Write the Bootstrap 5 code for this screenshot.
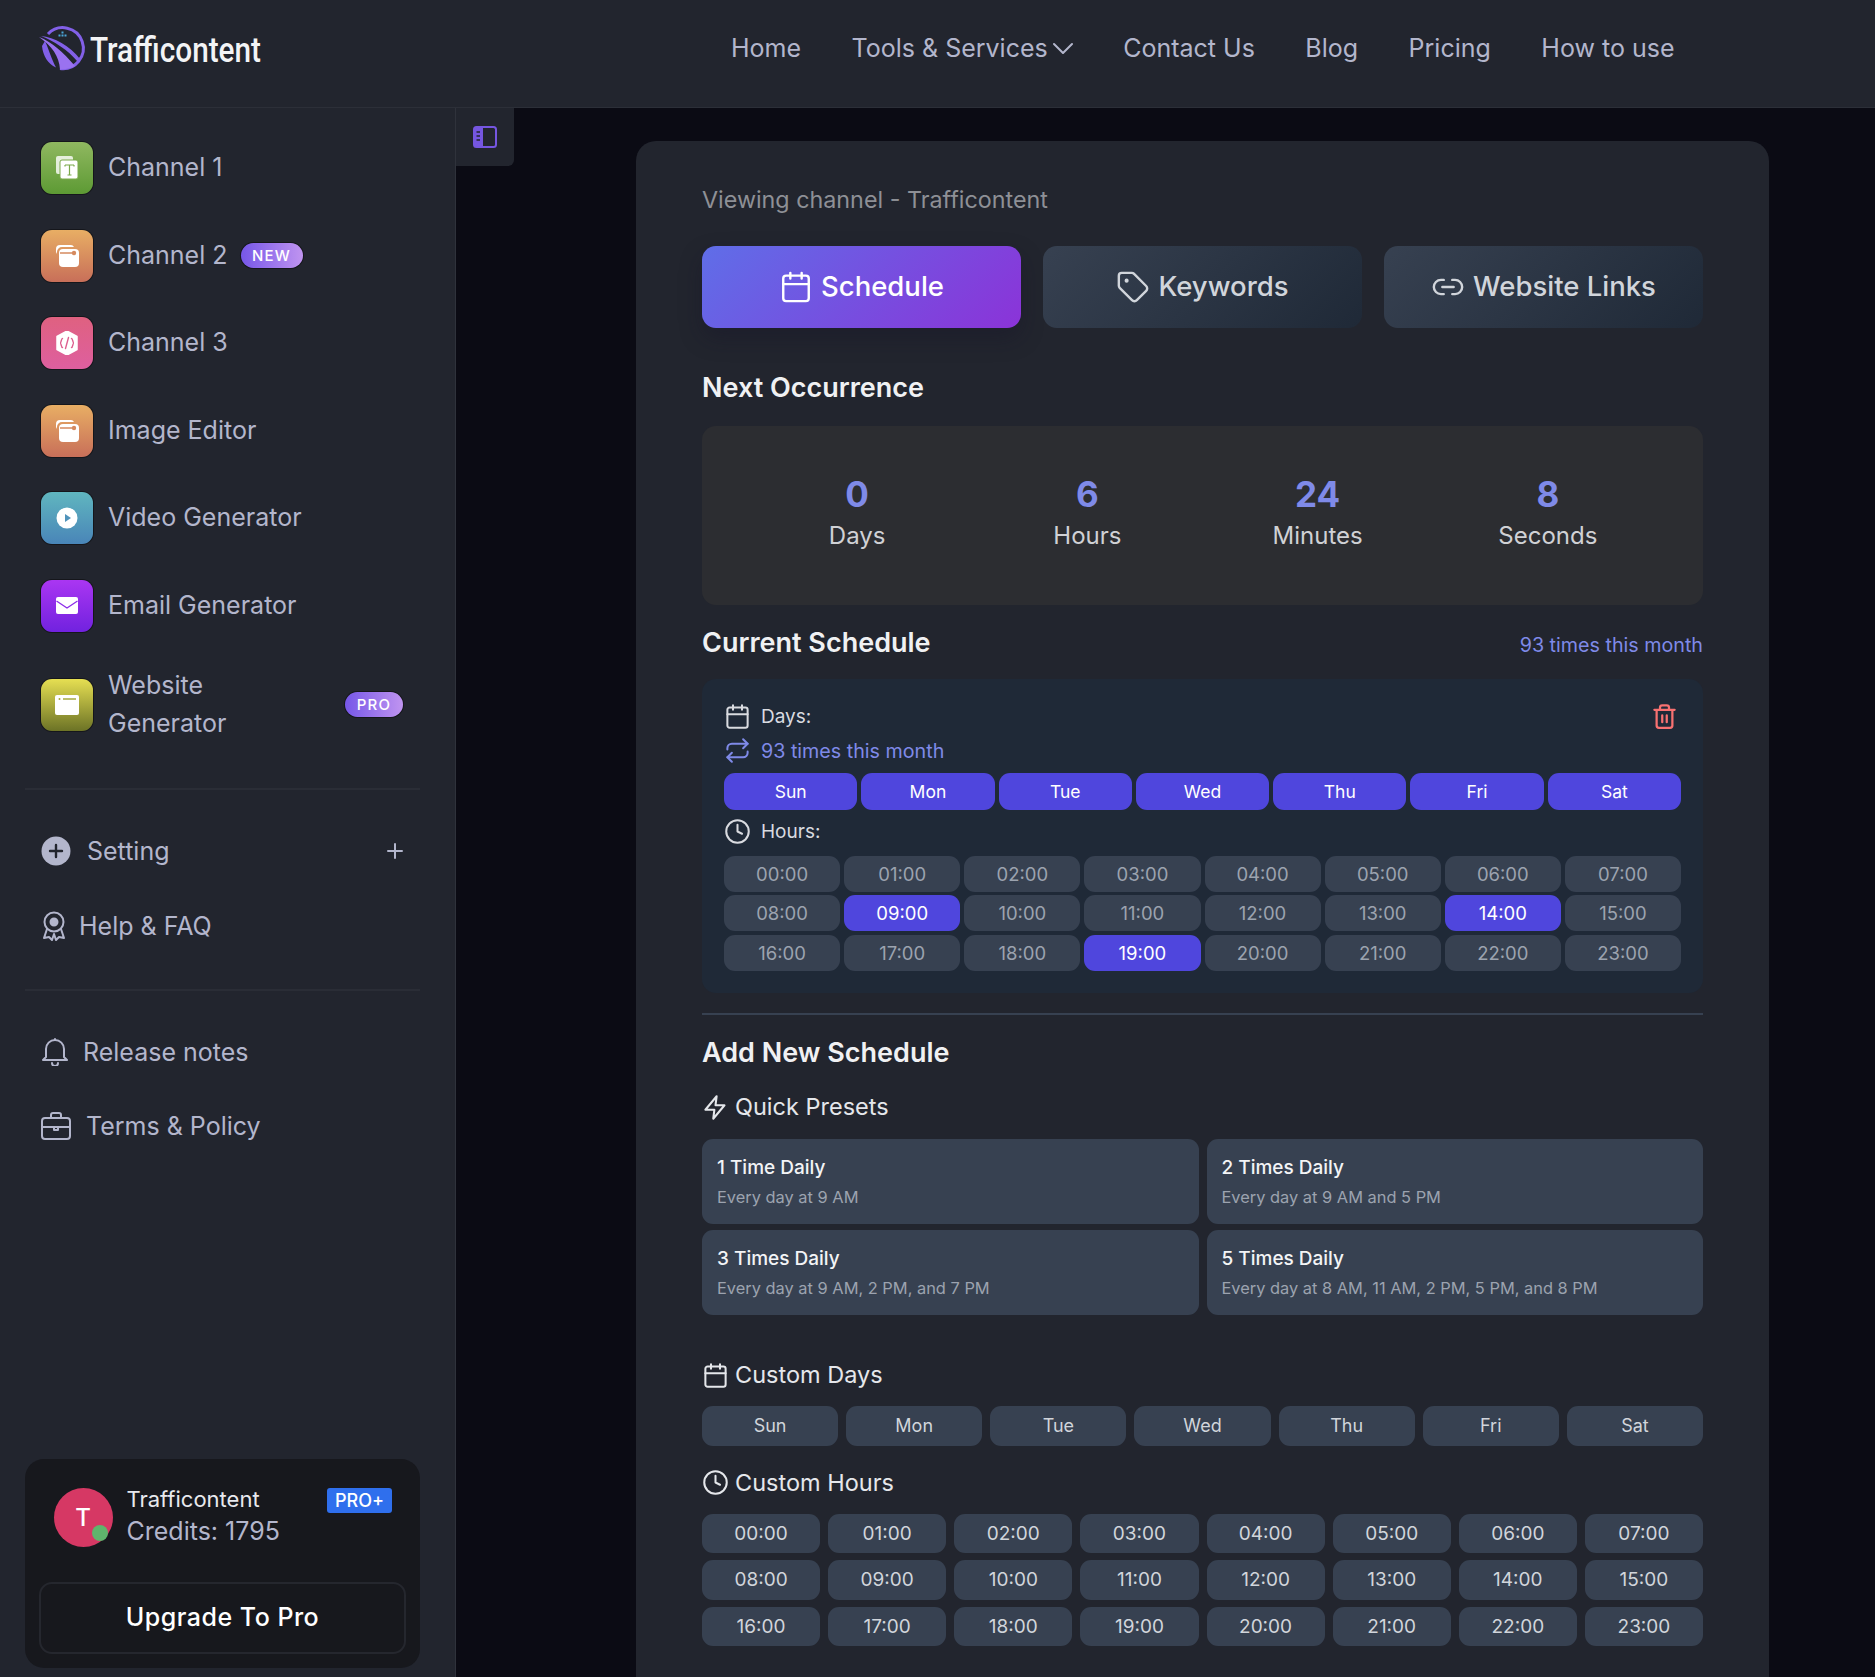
<!DOCTYPE html>
<html lang="en">
<head>
<meta charset="utf-8">
<title>Trafficontent</title>
<link href="https://cdn.jsdelivr.net/npm/bootstrap@5.3.0/dist/css/bootstrap.min.css" rel="stylesheet">
<style>
html,body{height:100%;overflow:hidden}
body{background:#0b0b14;font-family:Inter,"Noto Sans",sans-serif;color:#e5e7eb}
.ic{fill:none;stroke:currentColor;stroke-width:2;stroke-linecap:round;stroke-linejoin:round;flex:none}
.topbar{height:108px;background:#22252e;border-bottom:1px solid #2c2f38;padding:0 0 0 36px!important;flex-wrap:nowrap;justify-content:flex-start!important;align-items:flex-start}
.logo-link{display:flex;align-items:center;gap:2px;margin:22px 0 0;padding:0;width:226px;flex:none}
.logo-text{font-family:Roboto,sans-serif;font-weight:500;font-size:35px;line-height:42px;color:#f3f4f6;display:inline-block;transform:scaleX(.85);transform-origin:left center;padding-top:5px;white-space:nowrap}
.topnav{margin-left:469px;margin-top:30px;flex-direction:row;gap:50.5px}
.topnav .nav-link{padding:0;font-size:25px;line-height:36px;color:#b3b6cc;white-space:nowrap;display:flex;align-items:center;gap:5px}
.shell{height:1569px}
.side{width:456px;flex:none;background:#22252e;border-right:1px solid #2f323b;padding:34px 0 9px 0}
.chan{display:flex;align-items:center;padding:0 52px 0 41px;margin-bottom:35.5px;font-size:25px;line-height:37.5px;color:#b3b6cc}
.tile{width:52px;height:52px;border-radius:11px;flex:none;margin-right:15px;display:flex;align-items:center;justify-content:center;box-shadow:0 0 0 1px #15161b}
.t-green{background:linear-gradient(#90b860,#5d9a34)}
.t-orange{background:linear-gradient(#e8ae64,#c86f59)}
.t-pink{background:linear-gradient(#df6180,#de5f9f)}
.t-teal{background:linear-gradient(#60b6bf,#4985b8)}
.t-purple{background:linear-gradient(#aa36f2,#7122df)}
.t-yellow{background:linear-gradient(#e6df52,#6c7326)}
.pill{border-radius:20px;background:linear-gradient(90deg,#7657e8,#c094f0);color:#fff;font-size:15px;font-weight:500;letter-spacing:1.2px;height:25px;line-height:25px;padding:0;text-align:center;box-shadow:0 0 0 1px #15161b}
.pill-new{width:62px;margin-left:13px}
.pill-pro{width:58px;margin-left:auto}
.wrap-name{width:190px}
.sep{height:2px;background:#2a2d36;margin:0 35px 0 25px}
.sublink{display:flex;align-items:center;font-size:25px;line-height:36px;color:#b3b6cc;padding:0 52px 0 41px;text-decoration:none}
.ucard{margin:auto 35px 0 25px;height:209px;background:#17181d;border-radius:19px;padding:29px 14px 14px}
.avatar{width:59px;height:59px;border-radius:50%;background:#d63864;color:#fff;font-size:24px;font-weight:500;display:flex;align-items:center;justify-content:center;position:relative;flex:none;margin-left:14.5px}
.online{position:absolute;width:16px;height:16px;border-radius:50%;background:#5fb56c;right:5px;bottom:6px}
.uinfo{margin-left:14px}
.uname{font-size:22px;line-height:23px;color:#e8e9ee}
.ucredit{font-size:25px;line-height:41px;color:#b3b6cc}
.proplus{background:#2f6fed;color:#fff;font-size:18px;font-weight:500;border-radius:3px;height:25px;line-height:25px;width:65px;text-align:center;padding:0;margin-left:auto;margin-right:14px}
.upg{display:block;width:100%;height:72px;margin-top:30px;background:transparent;border:2px solid #25272e;border-radius:13px;color:#fff;font-size:25px;font-weight:500;letter-spacing:.5px}
.upg:hover{color:#fff}
.toggler{width:58px;height:58px;background:#22252e;border:0;border-radius:0 0 6px 0;flex:none;display:flex;align-items:center;justify-content:center;padding:0}
.panel{width:1133px;margin:33px 0 0 122px;background:#22252e;border-radius:20px 20px 0 0;padding:42px 66px 0;flex:none;height:1600px}
.viewing{font-size:23.3px;line-height:34px;color:#8e9096;margin:0 0 29px}
.tabs{display:grid;grid-template-columns:repeat(3,1fr);gap:22px;margin-bottom:42px}
.tabbtn{height:82px;border-radius:14px;border:0;font-size:27.5px;font-weight:500;color:#d1d5db;background:linear-gradient(135deg,#374151,#1f2937);display:flex;align-items:center;justify-content:center;gap:8px;padding:0}
.tabbtn .ic{stroke-width:1.7}
.tabbtn.on{background:linear-gradient(135deg,#5f6ee8,#8b33d8);color:#fff;box-shadow:0 10px 22px rgba(20,18,40,.35)}
.h3x{font-size:27px;font-weight:600;line-height:36px;color:#f0f1f3;margin:0}
.count{height:179px;border-radius:14px;background:#2c2d31;margin-top:20px;padding:0 40px;display:grid;grid-template-columns:repeat(4,1fr);align-items:start;text-align:center}
.num{font-size:35px;font-weight:700;color:#7f8ae8;line-height:44px;margin-top:46px}
.lab{font-size:24px;line-height:36px;color:#d0d1d5;margin-top:2px}
.sched-head{margin-top:20px;height:36px}
.times{font-size:19.7px;color:#7f8ae8}
.headtimes{padding-top:5px}
.curbox{height:314px;margin-top:18px;background:#1f2937;border-radius:14px;padding:24px 22px 0 22px;position:relative}
.rowline{display:flex;align-items:center;gap:10px;font-size:19px;line-height:26px;color:#d9dbe0}
.rowline .ic{stroke-width:1.8}
.rowline.times{font-size:19.7px;color:#7f8ae8;margin-top:7px}
.days7{display:grid;grid-template-columns:repeat(7,1fr);gap:4px}
.hours8{display:grid;grid-template-columns:repeat(8,1fr);gap:3.5px 4px}
.cell{border:0;padding:0;border-radius:11px;background:#374151;color:#9ca3af;font-size:18.5px;height:36px;line-height:36px;text-align:center}
.cell.sel{background:#4f46dd;color:#fff}
.cell.dayc{height:37px;line-height:37px;font-size:17.5px}
.trashbtn{position:absolute;right:25px;top:24px;color:#f87171;line-height:0}
.rule{height:2px;background:#374151;margin:20px 0 0}
.h3y{margin-top:20px}
.subh{display:flex;align-items:center;gap:6px;font-size:23.5px;line-height:34px;color:#e5e7eb;margin:0}
.subh .ic{stroke-width:1.8}
.presets{display:grid;grid-template-columns:1fr 1fr;gap:6px 8px;margin-top:15px}
.preset{height:85px;background:#374151;border-radius:11px;padding:15px 15px 0}
.pt{font-size:19px;font-weight:500;line-height:28px;color:#f3f4f6}
.ps{font-size:16.4px;line-height:26px;color:#9ca3af;margin-top:2px}
.cd{margin-top:43px}
.g7{display:grid;grid-template-columns:repeat(7,1fr);gap:8px;margin-top:14px}
.g8{display:grid;grid-template-columns:repeat(8,1fr);gap:7px 8px;margin-top:14px}
.cbtn{height:39.5px;line-height:39.5px;background:#374151;color:#d1d5db;border:0;border-radius:11px;padding:0;text-align:center;font-size:18px}
.g8 .cbtn{font-size:19px}
.ch{margin-top:20px}
</style>
</head>
<body>
<nav class="navbar topbar">
  <a class="navbar-brand logo-link" href="#">
    <svg width="52" height="52" viewBox="0 0 52 52" style="flex:none">
      <path d="M12 12A20.500 20.500 0 1 1 24 46.500" fill="none" stroke="#8260e8" stroke-width="3"/>
      <path d="M6 24C7 34 12 42 20 45.500C15 36 13 28 9 19Z" fill="#8260e8"/>
      <path d="M3 15C16 20 27 30 39 44C35 46 30 47.500 24 47.500C23 34 16 24 3 15Z" fill="#9a72f0"/>
      <path d="M5 14C18 15 34 24 44 37L42 40C32 28 18 19 5 14Z" fill="#8260e8"/>
      <g fill="#4aa6d8"><rect x="25.500" y="9.500" width="2" height="2"/><rect x="22.500" y="12.500" width="2" height="2"/><rect x="25.500" y="12.500" width="2" height="2"/><rect x="28.500" y="12.500" width="2" height="2"/></g>
    </svg>
    <span class="logo-text">Trafficontent</span>
  </a>
  <ul class="nav topnav">
    <li class="nav-item"><a class="nav-link" href="#">Home</a></li>
    <li class="nav-item"><a class="nav-link" href="#">Tools &amp; Services <svg class="ic" width="20" height="12" viewBox="0 0 20 12" stroke-width="1.6"><path d="M1 2l9 9 9-9"/></svg></a></li>
    <li class="nav-item"><a class="nav-link" href="#">Contact Us</a></li>
    <li class="nav-item"><a class="nav-link" href="#">Blog</a></li>
    <li class="nav-item"><a class="nav-link" href="#">Pricing</a></li>
    <li class="nav-item"><a class="nav-link" href="#">How to use</a></li>
  </ul>
</nav>
<div class="d-flex shell">
  <aside class="side d-flex flex-column">
    <div class="chan"><span class="tile t-green"><svg width="24" height="24" viewBox="0 0 24 24"><rect x="1" y="0" width="17" height="18" rx="2" fill="#fff" opacity=".8"/><rect x="5" y="4" width="18" height="19" rx="2" fill="#fff" stroke="#7ba94b" stroke-width="1"/><path d="M10 9h9M14.500 9v10M12.500 19h4M10 9v1.500M19 9v1.500" stroke="#7ba94b" stroke-width="1.200" fill="none"/></svg></span>Channel 1</div>
    <div class="chan"><span class="tile t-orange"><svg width="24" height="24" viewBox="0 0 24 24"><path d="M1 10V5a4 4 0 0 1 4-4h11a4 4 0 0 1 3 2H7a5 5 0 0 0-5 5z" fill="#fff"/><rect x="4" y="5" width="20" height="18" rx="4" fill="#fff"/><path d="M5 9h13" stroke="#d58a5f" stroke-width="1.500"/><circle cx="19" cy="9" r="2.200" fill="#d58a5f"/></svg></span>Channel 2<span class="badge pill pill-new">NEW</span></div>
    <div class="chan"><span class="tile t-pink"><svg width="22" height="24" viewBox="0 0 22 24"><path d="M11 0l10 5.500v13L11 24 1 18.500v-13z" fill="#fff" stroke="#fff" stroke-linejoin="round" stroke-width="1.500"/><path d="M6.500 7.500c-1.500 0-1 4.500-2.500 4.500 1.500 0 1 4.500 2.500 4.500M15.500 7.500c1.500 0 1 4.500 2.500 4.500-1.500 0-1 4.500-2.500 4.500M12.500 6.500l-3 11" fill="none" stroke="#de6090" stroke-width="1.400" stroke-linecap="round"/></svg></span>Channel 3</div>
    <div class="chan"><span class="tile t-orange"><svg width="24" height="24" viewBox="0 0 24 24"><path d="M1 10V5a4 4 0 0 1 4-4h11a4 4 0 0 1 3 2H7a5 5 0 0 0-5 5z" fill="#fff"/><rect x="4" y="5" width="20" height="18" rx="4" fill="#fff"/><path d="M5 9h13" stroke="#d58a5f" stroke-width="1.500"/><circle cx="19" cy="9" r="2.200" fill="#d58a5f"/></svg></span>Image Editor</div>
    <div class="chan"><span class="tile t-teal"><svg width="22" height="22" viewBox="0 0 22 22"><circle cx="11" cy="11" r="10.500" fill="#fff"/><path d="M9 7l6 4-6 4z" fill="#4f93bb"/></svg></span>Video Generator</div>
    <div class="chan"><span class="tile t-purple"><svg width="22" height="18" viewBox="0 0 22 18"><rect width="22" height="17" rx="2" fill="#fff"/><path d="M0.500 4l10.500 7 10.500-7" fill="none" stroke="#8b2ce8" stroke-width="1.300"/></svg></span>Email Generator</div>
    <div class="chan"><span class="tile t-yellow"><svg width="24" height="20" viewBox="0 0 24 20"><rect width="24" height="20" rx="2" fill="#fff"/><path d="M8 4h13" stroke="#a6a93f" stroke-width="1.500"/><circle cx="4.500" cy="4" r="1" fill="#a6a93f"/></svg></span><span class="wrap-name">Website Generator</span><span class="badge pill pill-pro">PRO</span></div>
    <div class="sep" style="margin-top:10px"></div>
    <a class="sublink" href="#" style="margin-top:43px"><svg width="30" height="30" viewBox="0 0 30 30" class="me-3" style="flex:none"><circle cx="15" cy="15" r="14.500" fill="#b3b6cc"/><path d="M15 9v12M9 15h12" stroke="#22252e" stroke-width="2.400" stroke-linecap="round"/></svg>Setting<svg class="ic ms-auto" width="16" height="16" viewBox="0 0 16 16" stroke-width="1.400"><path d="M8 1v14M1 8h14"/></svg></a>
    <a class="sublink" href="#" style="margin-top:39px"><svg class="ic" width="26" height="30" viewBox="0 0 26 30" stroke-width="2.400" style="margin-right:12px"><circle cx="13" cy="11" r="9.500"/><circle cx="13" cy="11" r="3.500" fill="currentColor"/><path d="M6 18L3 27l5-1 3 3 2-6 2 6 3-3 5 1-3-9"/></svg>Help &amp; FAQ</a>
    <div class="sep" style="margin-top:45px"></div>
    <a class="sublink" href="#" style="margin-top:43.500px"><svg class="ic" width="26" height="28" viewBox="0 0 26 28" stroke-width="2.100" style="margin-left:1px;margin-right:15px"><path d="M4 19V11a9 9 0 0 1 18 0v8l3 3H1zM10 25a3 3 0 0 0 6 0M13 1v1"/></svg>Release notes</a>
    <a class="sublink" href="#" style="margin-top:38px"><svg class="ic" width="30" height="28" viewBox="0 0 30 28" stroke-width="2.100" style="margin-right:15px"><rect x="1" y="6" width="28" height="21" rx="3"/><path d="M10 6V3a2 2 0 0 1 2-2h6a2 2 0 0 1 2 2v3M1 15h28M13 15v3h4v-3"/></svg>Terms &amp; Policy</a>
    <div class="ucard">
      <div class="d-flex">
        <div class="avatar">T<span class="online"></span></div>
        <div class="uinfo">
          <div class="uname">Trafficontent</div>
          <div class="ucredit">Credits: 1795</div>
        </div>
        <span class="badge proplus">PRO+</span>
      </div>
      <button class="btn upg" type="button">Upgrade To Pro</button>
    </div>
  </aside>
  <button class="toggler" type="button" aria-label="Toggle sidebar"><svg width="24" height="22" viewBox="0 0 24 22"><rect x="1" y="1" width="22" height="20" rx="2.500" fill="none" stroke="#7556e0" stroke-width="2"/><path d="M1 3.500a2.500 2.500 0 0 1 2.500-2.500H10v20H3.500A2.500 2.500 0 0 1 1 18.500z" fill="#7556e0"/><path d="M3.500 6H7M3.500 10H7M3.500 14H7" stroke="#22252e" stroke-width="1.500"/></svg></button>
  <main class="panel">
    <p class="viewing">Viewing channel - Trafficontent</p>
    <div class="tabs">
      <button class="btn tabbtn on" type="button"><svg class="ic" width="34" height="34" viewBox="0 0 24 24"><rect x="3" y="4" width="18" height="18" rx="2"/><path d="M16 2v4M8 2v4M3 10h18"/></svg>Schedule</button>
      <button class="btn tabbtn" type="button"><svg class="ic" width="34" height="34" viewBox="0 0 24 24"><path d="M12.600 2.600A2 2 0 0 0 11.200 2H4a2 2 0 0 0-2 2v7.200a2 2 0 0 0 .6 1.400l8.700 8.700a2.400 2.400 0 0 0 3.400 0l6.600-6.600a2.400 2.400 0 0 0 0-3.400z"/><circle cx="7.500" cy="7.500" r=".6" fill="currentColor"/></svg>Keywords</button>
      <button class="btn tabbtn" type="button"><svg class="ic" width="34" height="34" viewBox="0 0 24 24"><path d="M9 17H7A5 5 0 0 1 7 7h2M15 7h2a5 5 0 1 1 0 10h-2M8 12h8"/></svg>Website Links</button>
    </div>
    <h3 class="h3x">Next Occurrence</h3>
    <div class="count">
      <div><div class="num">0</div><div class="lab">Days</div></div>
      <div><div class="num">6</div><div class="lab">Hours</div></div>
      <div><div class="num">24</div><div class="lab">Minutes</div></div>
      <div><div class="num">8</div><div class="lab">Seconds</div></div>
    </div>
    <div class="d-flex justify-content-between align-items-center sched-head">
      <h3 class="h3x">Current Schedule</h3>
      <span class="times headtimes">93 times this month</span>
    </div>
    <div class="curbox">
      <div class="rowline"><svg class="ic" width="27" height="27" viewBox="0 0 24 24"><rect x="3" y="4" width="18" height="18" rx="2"/><path d="M16 2v4M8 2v4M3 10h18"/></svg>Days:</div>
      <div class="rowline times"><svg class="ic" width="27" height="27" viewBox="0 0 24 24"><path d="M17 2l4 4-4 4"/><path d="M3 11V10a4 4 0 0 1 4-4h14M7 22l-4-4 4-4"/><path d="M21 13v1a4 4 0 0 1-4 4H3"/></svg>93 times this month</div>
      <span class="trashbtn"><svg class="ic" width="27" height="27" viewBox="0 0 24 24" stroke-width="1.800"><path d="M3 6h18M19 6v14a2 2 0 0 1-2 2H7a2 2 0 0 1-2-2V6M8 6V4a2 2 0 0 1 2-2h4a2 2 0 0 1 2 2v2M10 11v6M14 11v6"/></svg></span>
      <div class="days7" style="margin-top:9px">
        <div class="cell dayc sel">Sun</div><div class="cell dayc sel">Mon</div><div class="cell dayc sel">Tue</div><div class="cell dayc sel">Wed</div><div class="cell dayc sel">Thu</div><div class="cell dayc sel">Fri</div><div class="cell dayc sel">Sat</div>
      </div>
      <div class="rowline" style="margin-top:8px"><svg class="ic" width="27" height="27" viewBox="0 0 24 24"><circle cx="12" cy="12" r="10"/><path d="M12 6v6l4 2"/></svg>Hours:</div>
      <div class="hours8" style="margin-top:10.500px">
        <div class="cell">00:00</div><div class="cell">01:00</div><div class="cell">02:00</div><div class="cell">03:00</div><div class="cell">04:00</div><div class="cell">05:00</div><div class="cell">06:00</div><div class="cell">07:00</div>
        <div class="cell">08:00</div><div class="cell sel">09:00</div><div class="cell">10:00</div><div class="cell">11:00</div><div class="cell">12:00</div><div class="cell">13:00</div><div class="cell sel">14:00</div><div class="cell">15:00</div>
        <div class="cell">16:00</div><div class="cell">17:00</div><div class="cell">18:00</div><div class="cell sel">19:00</div><div class="cell">20:00</div><div class="cell">21:00</div><div class="cell">22:00</div><div class="cell">23:00</div>
      </div>
    </div>
    <div class="rule"></div>
    <h3 class="h3x h3y">Add New Schedule</h3>
    <h4 class="subh fw-normal" style="margin-top:19px"><svg class="ic" width="27" height="27" viewBox="0 0 24 24"><path d="M13 2L3 14h8l-1 8 10-12h-8z"/></svg>Quick Presets</h4>
    <div class="presets">
      <div class="preset"><div class="pt">1 Time Daily</div><div class="ps">Every day at 9 AM</div></div>
      <div class="preset"><div class="pt">2 Times Daily</div><div class="ps">Every day at 9 AM and 5 PM</div></div>
      <div class="preset"><div class="pt">3 Times Daily</div><div class="ps">Every day at 9 AM, 2 PM, and 7 PM</div></div>
      <div class="preset"><div class="pt">5 Times Daily</div><div class="ps">Every day at 8 AM, 11 AM, 2 PM, 5 PM, and 8 PM</div></div>
    </div>
    <h4 class="subh fw-normal cd"><svg class="ic" width="27" height="27" viewBox="0 0 24 24"><rect x="3" y="4" width="18" height="18" rx="2"/><path d="M16 2v4M8 2v4M3 10h18"/></svg>Custom Days</h4>
    <div class="g7">
      <button class="btn cbtn" type="button">Sun</button><button class="btn cbtn" type="button">Mon</button><button class="btn cbtn" type="button">Tue</button><button class="btn cbtn" type="button">Wed</button><button class="btn cbtn" type="button">Thu</button><button class="btn cbtn" type="button">Fri</button><button class="btn cbtn" type="button">Sat</button>
    </div>
    <h4 class="subh fw-normal ch"><svg class="ic" width="27" height="27" viewBox="0 0 24 24"><circle cx="12" cy="12" r="10"/><path d="M12 6v6l4 2"/></svg>Custom Hours</h4>
    <div class="g8">
      <button class="btn cbtn" type="button">00:00</button><button class="btn cbtn" type="button">01:00</button><button class="btn cbtn" type="button">02:00</button><button class="btn cbtn" type="button">03:00</button><button class="btn cbtn" type="button">04:00</button><button class="btn cbtn" type="button">05:00</button><button class="btn cbtn" type="button">06:00</button><button class="btn cbtn" type="button">07:00</button>
      <button class="btn cbtn" type="button">08:00</button><button class="btn cbtn" type="button">09:00</button><button class="btn cbtn" type="button">10:00</button><button class="btn cbtn" type="button">11:00</button><button class="btn cbtn" type="button">12:00</button><button class="btn cbtn" type="button">13:00</button><button class="btn cbtn" type="button">14:00</button><button class="btn cbtn" type="button">15:00</button>
      <button class="btn cbtn" type="button">16:00</button><button class="btn cbtn" type="button">17:00</button><button class="btn cbtn" type="button">18:00</button><button class="btn cbtn" type="button">19:00</button><button class="btn cbtn" type="button">20:00</button><button class="btn cbtn" type="button">21:00</button><button class="btn cbtn" type="button">22:00</button><button class="btn cbtn" type="button">23:00</button>
    </div>
  </main>
</div>
<script src="https://cdn.jsdelivr.net/npm/bootstrap@5.3.0/dist/js/bootstrap.bundle.min.js"></script>
</body>
</html>
